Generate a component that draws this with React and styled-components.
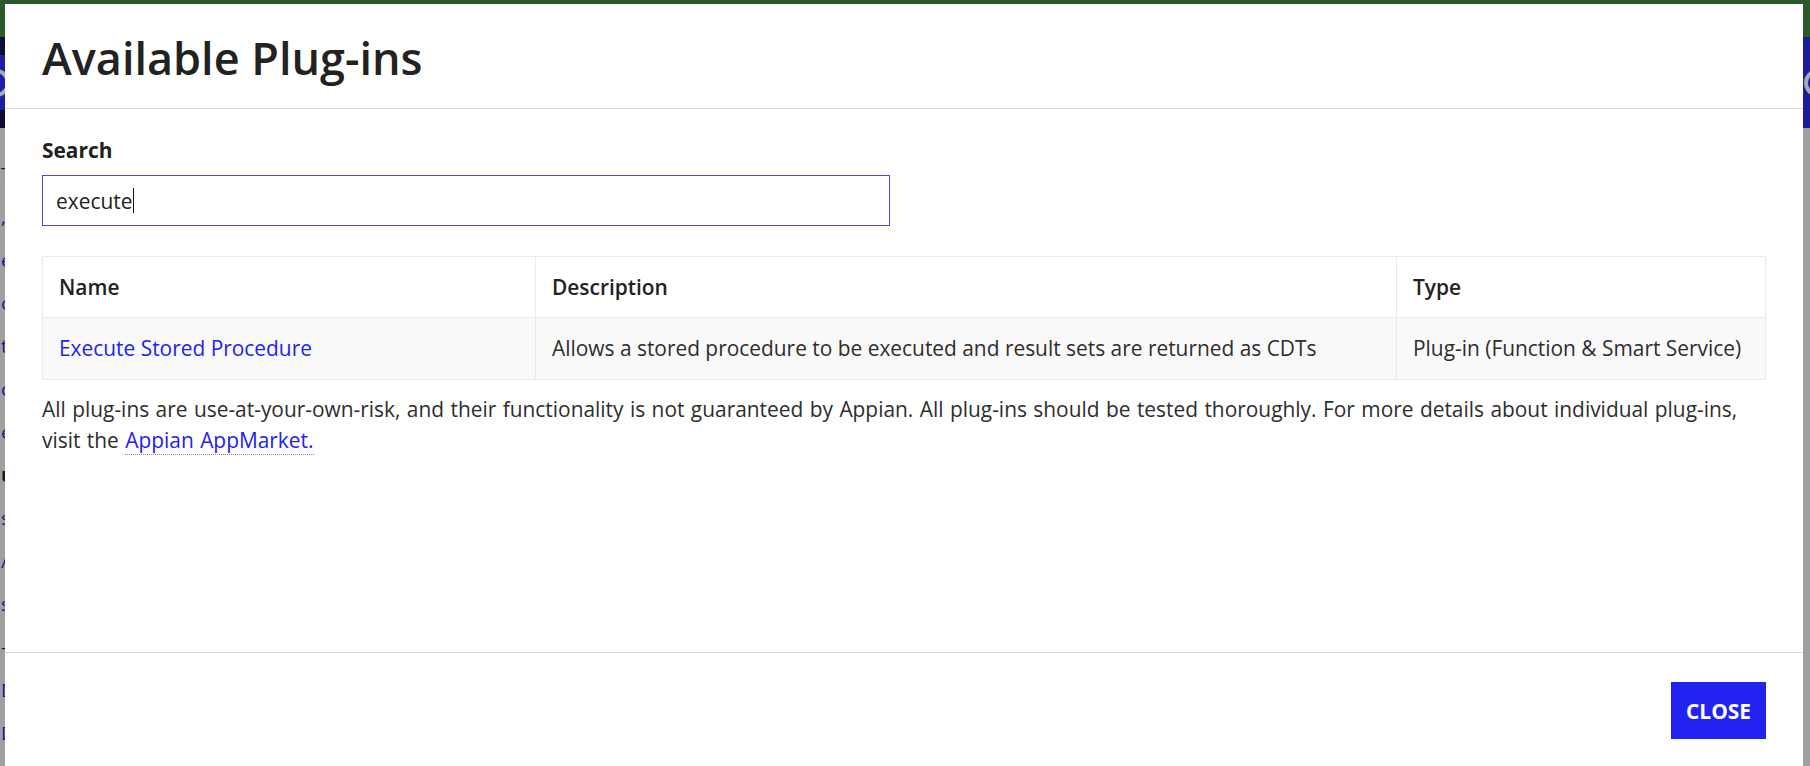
import React from "react";
import styled, { createGlobalStyle } from "styled-components";

const GlobalStyle = createGlobalStyle`
  html, body {
    margin: 0;
    padding: 0;
    height: 100%;
    overflow: hidden;
  }
  body {
    font-family: "Open Sans", "Liberation Sans", sans-serif;
    color: #2e2e2e;
  }
  * {
    box-sizing: border-box;
  }
`;

// page behind the dialog, already dimmed by the overlay
const Page = styled.div`
  position: relative;
  height: 766px;
  display: flex;
  flex-direction: column;
  background: #a0a0a0;
  overflow: hidden;
`;
const TopBar = styled.div`
  height: 37px;
  background: #2b5a2a;
`;
const NavBar = styled.div`
  height: 91px;
  background: #1c1c9a;
  display: flex;
  justify-content: space-between;
  align-items: center;
`;
const LogoBlock = styled.div`
  width: 40px;
  height: 100%;
  margin-left: -35px;
  padding: 18px 0;
  background: #0c0c36;
`;
const LogoInner = styled.div`
  height: 100%;
  background: #1e1ea4;
  display: flex;
  align-items: center;
  justify-content: center;
`;
const NavIcon = styled.div`
  width: 28px;
  height: 28px;
  margin-right: -22px;
  border: 4px solid #a8a8b8;
  border-radius: 50%;
`;
const BackdropContent = styled.div`
  flex: 1;
  padding: 25px 0 0 1px;
  display: flex;
  flex-direction: column;
  font-size: 19px;
  line-height: 43px;
`;
const BackdropLine = styled.div`
  white-space: nowrap;
  color: ${(p) => (p.$dark ? "#1a1a1a" : "#17179c")};
  font-weight: ${(p) => (p.$bold ? 700 : 400)};
`;

// dialog
const Modal = styled.div`
  position: absolute;
  left: 5px;
  top: 4px;
  width: 1798px;
  height: 764px;
  background: #fff;
  display: flex;
  flex-direction: column;
`;
const Header = styled.div`
  height: 105px;
  padding: 0 37px;
  display: flex;
  align-items: center;
  border-bottom: 1px solid #dcdcdc;
`;
const Title = styled.h1`
  margin: 2px 0 0;
  font-size: 45px;
  font-weight: 600;
  color: #222;
`;
const Body = styled.div`
  flex: 1;
  padding: 28px 37px 0;
  font-size: 20.9px;
`;
const Label = styled.div`
  font-weight: 700;
  line-height: 27px;
  color: #222;
  margin-bottom: 11px;
`;
const SearchBox = styled.div`
  width: 848px;
  height: 51px;
  padding: 0 13px;
  display: flex;
  align-items: center;
  border: 1px solid #4c4bd0;
  background: #fff;
  color: #222;
`;
const Caret = styled.span`
  display: inline-block;
  width: 0;
  height: 25px;
  margin-left: 1px;
  border-left: 1.5px solid #111;
`;
const Table = styled.table`
  width: 100%;
  margin-top: 30px;
  border-collapse: collapse;
  table-layout: fixed;
  border: 1px solid #ebebeb;
`;
const Th = styled.th`
  width: ${(p) => p.$w || "auto"};
  padding: 17px 16px;
  line-height: 26px;
  text-align: left;
  font-weight: 600;
  color: #222;
  border: 1px solid #ebebeb;
`;
const Td = styled.td`
  padding: 17px 16px;
  line-height: 27px;
  background: #f9f9f9;
  border: 1px solid #ebebeb;
  white-space: nowrap;
`;
const Link = styled.a`
  color: #2322f0;
  text-decoration: none;
  border-bottom: ${(p) => (p.$dotted ? "1px dotted #8a8a8a" : "none")};
  cursor: pointer;
`;
const Note = styled.p`
  max-width: 1700px;
  margin: 14px 0 0;
  line-height: 31px;
  word-spacing: 1px;
`;
const Footer = styled.div`
  padding: 29px 37px;
  display: flex;
  justify-content: flex-end;
  border-top: 1px solid #dcdcdc;
`;
const CloseButton = styled.button`
  height: 57px;
  padding: 0 15px;
  border: none;
  background: #2322f0;
  color: #fff;
  font-family: inherit;
  font-size: 20.9px;
  font-weight: 700;
  cursor: pointer;
`;

// first letters of the page's left-hand column
const backdropLines = [
  { t: "T", dark: true },
  { t: "," },
  { t: "e" },
  { t: "c" },
  { t: "t" },
  { t: "c" },
  { t: "e" },
  { t: "u", dark: true, bold: true },
  { t: "s" },
  { t: "/" },
  { t: "s" },
  { t: "-", dark: true },
  { t: "D" },
  { t: "D" },
];

const plugins = [
  {
    name: "Execute Stored Procedure",
    description:
      "Allows a stored procedure to be executed and result sets are returned as CDTs",
    type: "Plug-in (Function & Smart Service)",
  },
];

export default function App() {
  return (
    <>
      <GlobalStyle />
      <Page>
        <TopBar />
        <NavBar>
          <LogoBlock>
            <LogoInner>
              <NavIcon />
            </LogoInner>
          </LogoBlock>
          <NavIcon />
        </NavBar>
        <BackdropContent>
          {backdropLines.map((l, i) => (
            <BackdropLine key={i} $dark={l.dark} $bold={l.bold}>
              {l.t}
            </BackdropLine>
          ))}
        </BackdropContent>

        <Modal role="dialog">
          <Header>
            <Title>Available Plug-ins</Title>
          </Header>
          <Body>
            <Label>Search</Label>
            <SearchBox>
              execute
              <Caret />
            </SearchBox>
            <Table>
              <thead>
                <tr>
                  <Th $w="493px">Name</Th>
                  <Th $w="861px">Description</Th>
                  <Th>Type</Th>
                </tr>
              </thead>
              <tbody>
                {plugins.map((p) => (
                  <tr key={p.name}>
                    <Td>
                      <Link>{p.name}</Link>
                    </Td>
                    <Td>{p.description}</Td>
                    <Td>{p.type}</Td>
                  </tr>
                ))}
              </tbody>
            </Table>
            <Note>
              All plug-ins are use-at-your-own-risk, and their functionality is
              not guaranteed by Appian. All plug-ins should be tested
              thoroughly. For more details about individual plug-ins, visit the{" "}
              <Link $dotted>Appian AppMarket.</Link>
            </Note>
          </Body>
          <Footer>
            <CloseButton>CLOSE</CloseButton>
          </Footer>
        </Modal>
      </Page>
    </>
  );
}
